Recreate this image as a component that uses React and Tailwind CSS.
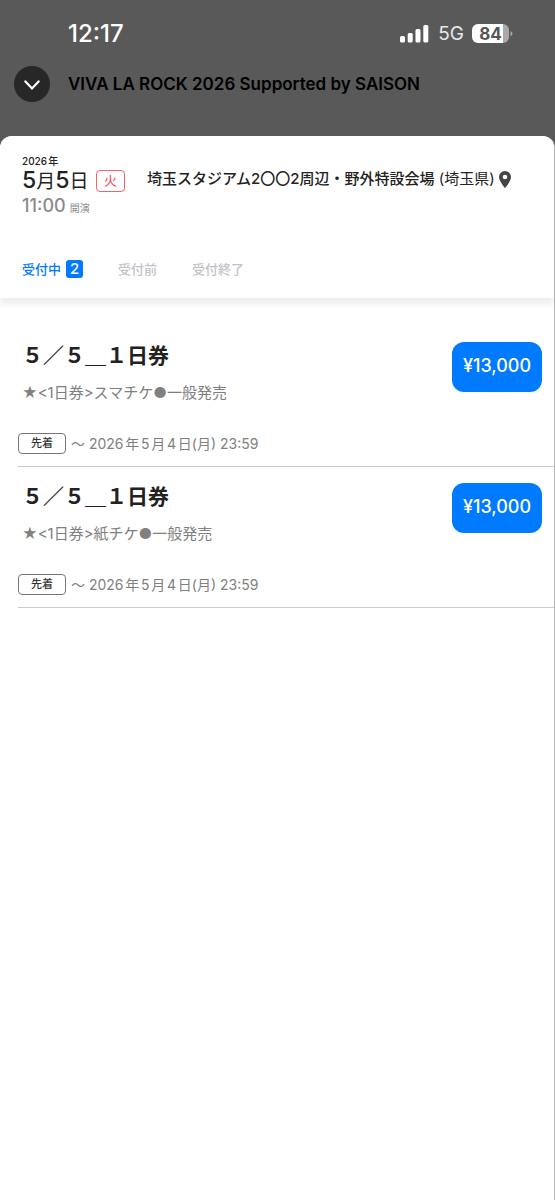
import React, { useState } from 'react';

const tickets = [
  {
    id: 1,
    title: '\uFF15\uFF0F\uFF15\uFF3F\uFF11日券',
    detail: '★<1日券>スマチケ●一般発売',
    deadline: '〜 2026年5月4日(月) 23:59',
    price: '¥13,000',
  },
  {
    id: 2,
    title: '\uFF15\uFF0F\uFF15\uFF3F\uFF11日券',
    detail: '★<1日券>紙チケ●一般発売',
    deadline: '〜 2026年5月4日(月) 23:59',
    price: '¥13,000',
  },
];

const tabs = [
  { id: 'open', label: '受付中', count: 2 },
  { id: 'upcoming', label: '受付前' },
  { id: 'closed', label: '受付終了' },
];

const StatusBar = () => (
  <div className="flex h-16 items-center justify-between pl-[68px] pr-[42px] pt-1 text-white">
    <span className="text-[24px] font-medium leading-7">12:17</span>
    <div className="flex items-center">
      <svg width="30" height="20" viewBox="0 0 30 20" fill="currentColor" aria-hidden="true">
        <rect x="0" y="12" width="5" height="6.5" rx="1.5" />
        <rect x="7.7" y="9" width="5" height="9.5" rx="1.5" />
        <rect x="15.5" y="5" width="5" height="13.5" rx="1.5" />
        <rect x="23.3" y="1" width="5" height="17.5" rx="1.5" />
      </svg>
      <span className="ml-2 text-[19px] text-gray-200">5G</span>
      <svg className="ml-2" width="41" height="20" viewBox="0 0 41 20" aria-hidden="true">
        <path d="M6 0H31V19H6A6 6 0 0 1 0 13V6A6 6 0 0 1 6 0Z" fill="#fff" />
        <path d="M31 0A6 6 0 0 1 37 6V13A6 6 0 0 1 31 19Z" fill="#a9a9a9" />
        <path d="M38.5 7Q40.5 8 40.5 9.5T38.5 12.5Z" fill="#a9a9a9" />
        <text x="18.5" y="15.5" textAnchor="middle" fontSize="17" fontWeight="700" fill="#555">84</text>
      </svg>
    </div>
  </div>
);

const TitleBar = () => (
  <div className="flex items-center gap-[18px] px-[14px] pb-[34px] pt-[2px]">
    <button
      type="button"
      aria-label="閉じる"
      className="flex size-9 shrink-0 items-center justify-center rounded-full bg-[#272727] text-white"
    >
      <svg width="18" height="18" viewBox="0 0 18 18" fill="none" stroke="currentColor" strokeWidth="2.2" aria-hidden="true">
        <path d="M2.4 6.4L9 13.4L15.6 6.4" strokeLinecap="round" strokeLinejoin="miter" />
      </svg>
    </button>
    <h1 className="text-[17px] font-semibold leading-6 text-black">VIVA LA ROCK 2026 Supported by SAISON</h1>
  </div>
);

const EventHeader = ({ activeTab, onChange }) => (
  <header className="rounded-t-xl bg-white pb-[17px] pl-[22px] pr-4 pt-[17px] shadow-[0_6px_6px_rgba(0,0,0,0.07)]">
    <div className="flex items-start">
      <div className="w-[125px] shrink-0">
        <p className="text-[10px] font-medium leading-4 [text-autospace:normal]">2026年</p>
        <div className="mt-px flex h-[22px] items-center justify-between pr-[22px]">
          <p className="whitespace-nowrap text-[19px] leading-[22px]">
            <span className="text-[23px] font-medium">5</span>月<span className="text-[23px] font-medium">5</span>日
          </p>
          <span className="flex h-[22px] w-[29px] shrink-0 items-center justify-center rounded border border-[#f5636b] text-[13px] text-[#f5434f]">
            火
          </span>
        </div>
        <p className="mt-[2px] whitespace-nowrap text-[18px] leading-6 text-[#8a8a8a]">
          <span className="font-medium">11:00</span>
          <span className="ml-1 text-[10px]">開演</span>
        </p>
      </div>
      <div className="flex items-center pt-[14px]">
        <p className="text-[15px] leading-6">
          <span className="font-medium">埼玉スタジアム2〇〇2周辺・野外特設会場</span> (埼玉県)
        </p>
        <svg className="ml-1 shrink-0" width="12" height="17" viewBox="0 0 12 17" fill="#444" aria-hidden="true">
          <path fillRule="evenodd" d="M6 0a6 6 0 0 0-6 6c0 4.3 6 11 6 11s6-6.7 6-11a6 6 0 0 0-6-6Zm0 8.3a2.3 2.3 0 1 1 0-4.6 2.3 2.3 0 0 1 0 4.6Z" />
        </svg>
      </div>
    </div>

    {/* Reception status */}
    <nav className="mt-[37px] flex items-center gap-[35px] text-[13px] font-medium leading-6">
      {tabs.map((tab) => (
        <button
          key={tab.id}
          type="button"
          onClick={() => onChange(tab.id)}
          className={
            activeTab === tab.id
              ? 'flex items-center gap-[5px] text-[#007aff]'
              : 'flex items-center gap-[5px] text-[#c2c2c8]'
          }
        >
          {tab.label}
          {tab.count && (
            <span className="flex h-[18px] w-[17px] items-center justify-center rounded-[3px] bg-[#007aff] text-[15px] text-white">
              {tab.count}
            </span>
          )}
        </button>
      ))}
    </nav>
  </header>
);

const TicketRow = ({ ticket }) => (
  <li className="ml-[18px] border-b border-[#cacace] pb-3 pr-3 pt-4">
    <div className="flex items-start justify-between">
      <div className="pl-1">
        <h2 className="text-[21px] font-bold leading-7">{ticket.title}</h2>
        <p className="mt-[11px] text-[15px] leading-6 text-[#808080]">{ticket.detail}</p>
      </div>
      <button
        type="button"
        className="flex h-[50px] w-[90px] shrink-0 justify-center rounded-xl bg-[#007aff] pt-3 text-[18px] font-medium leading-6 text-white"
      >
        {ticket.price}
      </button>
    </div>
    <div className="mt-7 flex items-center gap-[5px]">
      <span className="flex h-[21px] w-12 items-center justify-center rounded border border-[#777] text-[11px] font-medium text-[#333]">
        先着
      </span>
      <span className="text-[14px] leading-5 text-[#808080] [text-autospace:normal]">{ticket.deadline}</span>
    </div>
  </li>
);

const App = () => {
  const [activeTab, setActiveTab] = useState('open');

  return (
    <div
      lang="ja"
      className="flex min-h-screen flex-col bg-[#595959] font-['Inter','Noto_Sans_CJK_JP',sans-serif] text-[#222] [text-autospace:no-autospace]"
    >
      <StatusBar />
      <TitleBar />
      <main className="flex-1 rounded-t-xl border-r border-[#b5b5b5] bg-white">
        <EventHeader activeTab={activeTab} onChange={setActiveTab} />
        <ul className="pt-7">
          {activeTab === 'open' && tickets.map((ticket) => <TicketRow key={ticket.id} ticket={ticket} />)}
        </ul>
      </main>
    </div>
  );
};

export default App;
